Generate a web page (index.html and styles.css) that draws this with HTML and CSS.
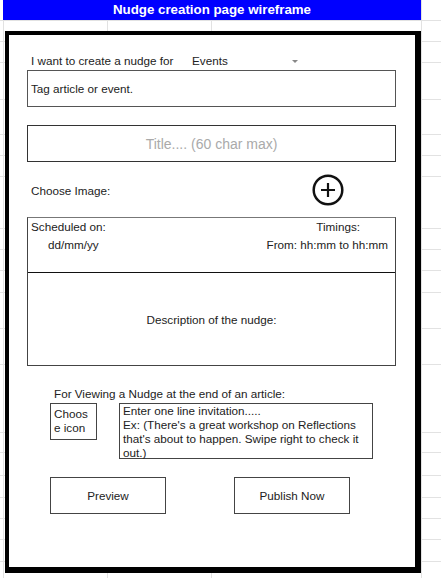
FILE: index.html
```html
<!DOCTYPE html>
<html>
<head>
  <title>Nudge creation page wireframe</title>
  <link rel="stylesheet" href="styles.css">
</head>
<body>
  <div class="sheet">
    <div class="banner">Nudge creation page wireframe</div>

    <div class="frame">
      <div class="pick-row">
        <span class="pick-label">I want to create a nudge for</span>
        <span class="pick-value">Events</span>
        <span class="caret"></span>
      </div>

      <div class="box tag-box">Tag article or event.</div>

      <div class="box title-box">Title.... (60 char max)</div>

      <div class="image-row">
        <span class="image-label">Choose Image:</span>
        <svg class="add-icon" width="32" height="32" viewBox="0 0 32 32">
          <circle cx="16" cy="16" r="14.3" fill="none" stroke="#111" stroke-width="2.5"/>
          <path d="M16 9v14M9 16h14" stroke="#111" stroke-width="2.2"/>
        </svg>
      </div>

      <div class="box sched">
        <div class="sched-head">
          <div class="sched-col">
            <div>Scheduled on:</div>
            <div class="date">dd/mm/yy</div>
          </div>
          <div class="sched-col times">
            <div class="timings">Timings:</div>
            <div>From: hh:mm to hh:mm</div>
          </div>
        </div>
        <div class="desc">Description of the nudge:</div>
      </div>

      <div class="viewing">
        <div class="viewing-label">For Viewing a Nudge at the end of an article:</div>
        <div class="invite-row">
          <div class="box icon-box">Choos<br>e icon</div>
          <div class="box invite-box">
            Enter one line invitation.....<br>
            Ex: (There's a great workshop on Reflections<br>
            that's about to happen. Swipe right to check it<br>
            out.)
          </div>
        </div>
        <div class="actions">
          <div class="box btn">Preview</div>
          <div class="box btn">Publish Now</div>
        </div>
      </div>
    </div>
  </div>
</body>
</html>
```

FILE: styles.css
```css
body {
  margin: 0;
  font-family: "Liberation Sans", Arial, sans-serif;
  font-size: 11.7px;
  color: #222;
  background: #fff;
}

/* spreadsheet grid behind the drawing */
.sheet {
  --g: linear-gradient(#e2e2e2, #e2e2e2);
  width: 441px;
  height: 578px;
  overflow: hidden;
  box-sizing: border-box;
  background-image:
    var(--g), var(--g), var(--g), var(--g), var(--g),
    var(--g), var(--g), var(--g), var(--g), var(--g),
    var(--g), var(--g), var(--g), var(--g), var(--g),
    var(--g), var(--g), var(--g), var(--g), var(--g),
    var(--g), var(--g), var(--g), var(--g);
  background-repeat: no-repeat;
  background-size:
    100% 1px, 100% 1px, 100% 1px, 100% 1px, 100% 1px,
    100% 1px, 100% 1px, 100% 1px, 100% 1px, 100% 1px,
    100% 1px, 100% 1px, 100% 1px, 100% 1px, 100% 1px,
    100% 1px, 100% 1px, 100% 1px, 100% 1px, 100% 1px,
    1px 100%, 1px 100%, 1px 100%, 1px 100%;
  background-position:
    0 20px, 0 41px, 0 62px, 0 99px, 0 134px,
    0 155px, 0 176px, 0 228px, 0 249px, 0 270px,
    0 292px, 0 328px, 0 364px, 0 432px, 0 452px,
    0 475px, 0 497px, 0 518px, 0 539px, 0 561px,
    3px 0, 107px 0, 211px 0, 421px 0;
}

.banner {
  margin-left: 3px;
  width: 418px;
  height: 20px;
  line-height: 20px;
  background: #0000ff;
  color: #fff;
  font-weight: bold;
  font-size: 13.3px;
  text-align: center;
}

.frame {
  margin: 11px 0 0 5px;
  width: 416px;
  height: 542px;
  box-sizing: border-box;
  border: solid #000;
  border-width: 4px 6px 6px 4px;
  background: #fff;
  padding: 18px 0 0 18px;
}

.box {
  box-sizing: border-box;
  border: 1px solid #444;
}

.pick-row {
  display: flex;
  align-items: center;
  height: 16px;
  line-height: 16px;
  padding-left: 4px;
}

.pick-label {
  width: 161px;
}

.caret {
  margin-left: 64px;
  width: 0;
  height: 0;
  border-left: 3px solid transparent;
  border-right: 3px solid transparent;
  border-top: 3px solid #888;
}

.tag-box {
  margin-top: 1px;
  width: 369px;
  height: 37px;
  display: flex;
  align-items: center;
  padding-left: 3px;
  border-color: #555;
}

.title-box {
  margin-top: 18px;
  width: 369px;
  height: 37px;
  display: flex;
  align-items: center;
  justify-content: center;
  font-size: 14px;
  color: #aaa;
  border-color: #333;
}

.image-row {
  margin-top: 13px;
  height: 30px;
  display: flex;
  align-items: center;
}

.image-label {
  width: 281px;
  padding-left: 4px;
}

.sched {
  margin-top: 12px;
  width: 369px;
  height: 149px;
  display: flex;
  flex-direction: column;
  border-top-color: #777;
}

.sched-head {
  height: 54px;
  display: flex;
  justify-content: space-between;
  line-height: 18px;
  padding: 0 7px 0 3px;
}

.date {
  padding-left: 17px;
}

.times {
  text-align: right;
}

.timings {
  padding-right: 28px;
}

.desc {
  flex: 1;
  border-top: 1px solid #111;
  display: flex;
  align-items: center;
  justify-content: center;
}

.viewing {
  margin-left: 23px;
}

.viewing-label {
  margin-top: 21px;
  line-height: 14px;
  padding-left: 4px;
}

.invite-row {
  margin-top: 2px;
  display: flex;
  align-items: flex-start;
  gap: 22px;
}

.icon-box {
  width: 47px;
  height: 37px;
  padding: 3px 0 0 3px;
  line-height: 14px;
}

.invite-box {
  width: 254px;
  height: 56px;
  padding-left: 3px;
  line-height: 14px;
  white-space: nowrap;
}

.actions {
  margin-top: 18px;
  display: flex;
  gap: 68px;
}

.btn {
  width: 116px;
  height: 37px;
  display: flex;
  align-items: center;
  justify-content: center;
}
```
